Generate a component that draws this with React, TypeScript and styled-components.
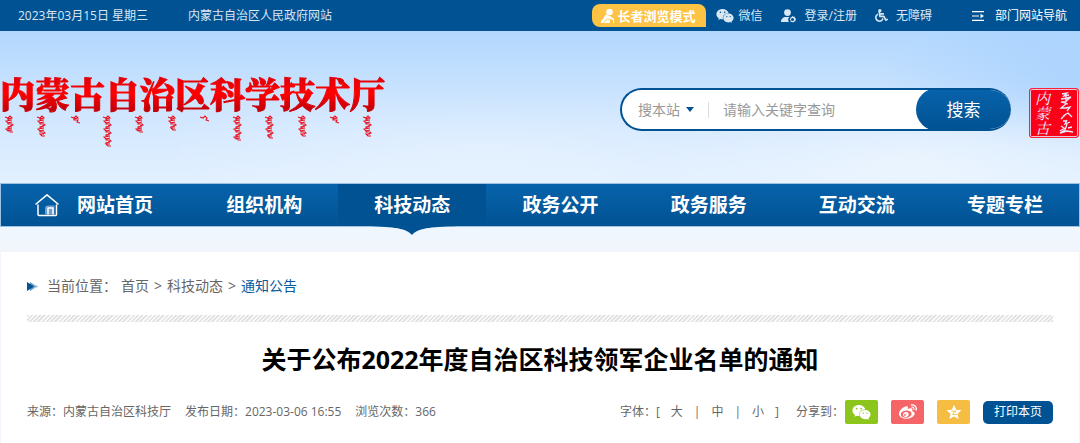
import React from "react";
import styled, { createGlobalStyle } from "styled-components";
import { FaWeixin, FaWeibo, FaWheelchair } from "react-icons/fa";

const deep = "#005293";
const bright = "#0863ab";

const GlobalStyle = createGlobalStyle`
  * { box-sizing: border-box; }
  body {
    margin: 0;
    background: #eef5fd;
    color: #666;
    font: 12px/20px "Open Sans", "Noto Sans CJK SC", sans-serif;
  }
  a { color: inherit; text-decoration: none; }
  button, input, select { font: inherit; }
  svg { display: block; flex: none; }
`;

const Page = styled.div`
  min-height: 100vh;
  display: flex;
  flex-direction: column;
  background:
    radial-gradient(ellipse 260px 70px at 84% 160px, rgba(255, 255, 255, 0.4), transparent),
    radial-gradient(ellipse 340px 60px at 45% 150px, rgba(255, 255, 255, 0.25), transparent),
    radial-gradient(ellipse 200px 70px at 100% 80px, rgba(130, 190, 255, 0.35), transparent),
    linear-gradient(#b2d7fe 31px, #cce4fe 100px, #e2f0ff 180px, #eff6fe 228px, #f2f6fc 252px);
`;

const TopBar = styled.div`
  display: flex;
  align-items: center;
  justify-content: space-between;
  height: 31px;
  padding: 0 13px 0 18px;
  background: ${deep};
  color: #d9e7f3;
`;

const TopGroup = styled.div<{ $gap: number }>`
  display: flex;
  align-items: center;
  gap: ${(p) => p.$gap}px;
  white-space: nowrap;
`;

const TopLink = styled.a<{ $strong?: boolean; $gap?: number }>`
  display: flex;
  align-items: center;
  gap: ${(p) => p.$gap ?? 8}px;
  color: ${(p) => (p.$strong ? "#fff" : "inherit")};
`;

const Spaced = styled(TopLink)`
  margin-left: 22px;
`;

const ElderLink = styled.a`
  display: flex;
  align-items: center;
  gap: 2px;
  height: 23px;
  padding: 0 10px 0 8px;
  border-radius: 8px 8px 0 8px;
  background: #fdc345;
  color: #fff;
  font-size: 13px;
  font-weight: 700;
  margin-right: -8px;
`;

const Header = styled.header`
  display: flex;
  align-items: flex-start;
  height: 153px;
  padding: 42px 1px 0 0;
`;

const Logo = styled.a`
  display: block;
  margin-right: auto;
`;

const LogoName = styled.h1`
  margin: 0 0 2px;
  font: 900 35px/40px "Noto Serif CJK SC", "Noto Sans CJK SC", serif;
  white-space: nowrap;
  color: transparent;
  -webkit-text-stroke: 1px transparent;
  background: linear-gradient(#e00008 10%, #ff0000 50%, #c60008 90%);
  background-clip: text;
  -webkit-background-clip: text;
`;

const Search = styled.form`
  display: flex;
  align-items: center;
  width: 391px;
  height: 43px;
  margin: 15px 18px 0 16px;
  border: 2px solid ${deep};
  border-right: 0;
  border-radius: 22px;
  background: #fff;
  overflow: hidden;
  font-size: 14px;
`;

const ScopeField = styled.label`
  display: flex;
  align-items: center;
  gap: 6px;
  padding: 0 14px 0 16px;
  border-right: 1px solid #ddd;
  line-height: 16px;
`;

const Scope = styled.select`
  appearance: none;
  width: 42px;
  height: 16px;
  padding: 0;
  border: 0;
  background: none;
  color: #999;
  line-height: 16px;
`;

const Keyword = styled.input`
  flex: 1;
  min-width: 0;
  padding: 0 0 0 14px;
  border: 0;
  outline: 0;
  background: none;
  color: #666;
  &::placeholder { color: #999; opacity: 1; }
`;

const SearchButton = styled.button`
  align-self: stretch;
  width: 95px;
  margin: -2px 0;
  border: 0;
  border-radius: 22px;
  background: linear-gradient(${bright}, ${deep});
  color: #fff;
  font-size: 17px;
`;

const Seal = styled.div`
  display: flex;
  justify-content: space-around;
  align-items: center;
  width: 50px;
  height: 50px;
  margin-top: 15px;
  border: 1px solid #ff2237;
  border-radius: 3px;
  background: #fb0019;
  box-shadow: inset 0 0 0 1px #e6c4dd;
  color: #e3eeff;
`;

const SealName = styled.span`
  writing-mode: vertical-rl;
  font: italic 400 15px/16px "Noto Serif CJK SC", serif;
`;

const Nav = styled.nav`
  display: grid;
  grid-template-columns: 189fr repeat(6, 148fr);
  height: 42px;
  margin: 0 1px;
  background: linear-gradient(${bright}, ${deep});
  box-shadow: 0 0 0 1px #9dc2e3;
`;

const NavLink = styled.a<{ $active?: boolean; $home?: boolean }>`
  position: relative;
  display: flex;
  align-items: center;
  justify-content: ${(p) => (p.$home ? "flex-start" : "center")};
  gap: 18px;
  padding-left: ${(p) => (p.$home ? 34 : 0)}px;
  background: ${(p) => (p.$active ? deep : "none")};
  color: #fff;
  font-size: 19px;
  font-weight: 700;
  white-space: nowrap;
`;

const NavPointer = styled.svg`
  position: absolute;
  top: 100%;
  left: 50%;
  margin-left: -45px;
`;

const Main = styled.main`
  flex: 1;
  margin: 26px 1px 0;
  padding: 24px 26px 18px;
  background: #fff;
`;

const Crumbs = styled.div`
  display: flex;
  align-items: center;
  gap: 4px;
  font-size: 14px;
  line-height: 20px;
`;

const CrumbLabel = styled.span`
  margin-left: 5px;
`;

const CrumbMark = styled.span`
  margin: 0 1px;
`;

const CrumbLink = styled.a<{ $current?: boolean }>`
  color: ${(p) => (p.$current ? "#0a5a9c" : "inherit")};
`;

const Stripe = styled.div`
  height: 7px;
  margin: 19px 0 21px;
  background: repeating-linear-gradient(135deg, #e0e0e0 0 1px, #fafafa 2px 3px);
`;

const Title = styled.h2`
  margin: 0;
  color: #000;
  font-size: 25px;
  font-weight: 700;
  line-height: 32px;
  text-align: center;
`;

const Meta = styled.div`
  display: flex;
  align-items: center;
  justify-content: space-between;
  margin-top: 25px;
  white-space: nowrap;
`;

const MetaGroup = styled.div<{ $gap: number }>`
  display: flex;
  align-items: center;
  gap: ${(p) => p.$gap}px;
`;

const FontSizes = styled.div`
  display: flex;
  align-items: center;
  gap: 11px;
  margin-right: 4px;
`;

const SizeButton = styled.button`
  padding: 0;
  border: 0;
  background: none;
  color: inherit;
`;

const ShareButton = styled.button<{ $color: string }>`
  display: flex;
  align-items: center;
  justify-content: center;
  width: 33px;
  height: 24px;
  padding: 0;
  border: 0;
  border-radius: 2px;
  background: ${(p) => p.$color};
  color: #fff;
`;

const ShareLabel = styled.span`
  width: 36px;
`;

const PrintButton = styled.button`
  width: 70px;
  height: 23px;
  padding: 0;
  border: 0;
  border-radius: 5px;
  background: ${deep};
  color: #fff;
`;

/* A vertical brush line: a spine with short teeth and a closing tail. */
function brush(x: number, top: number, length: number) {
  let d = `M${x - 5} ${top + 1}l3 1l2-2l2 2`;
  let y = top + 2;
  let i = 0;
  while (y < top + length - 4) {
    d += i % 4 === 1 ? "l-6 1l2 2l4-1" : i % 4 === 3 ? "l1 1l-3 1l2 0" : "l-4 1l0 1l4 0";
    y += 2;
    i += 1;
  }
  return d + (length > 8 ? "l-4 0l2 2l3 0" : "l-1 2l3 1");
}

const brushLines = [
  [10, 17], [42, 21], [76, 8], [108, 31], [140, 18], [173, 16],
  [205, 3], [238, 25], [270, 23], [303, 22], [335, 7], [368, 22],
];

const LogoScript = () => (
  <svg width="385" height="36" viewBox="0 0 385 36" fill="none" stroke="#ea1220" strokeWidth="1.1" aria-hidden="true">
    {brushLines.map(([x, length]) => (
      <path key={x} d={brush(x, 1, length)} />
    ))}
  </svg>
);

const SealScript = () => (
  <svg width="16" height="44" viewBox="0 0 16 44" fill="none" stroke="currentColor" strokeWidth="1.3" aria-hidden="true">
    <path d="M4 3l5-1-3 3 5-1M8 4v7M3 8l6-1 4-1-6 5-4 0 7 2M9 12l-6 5h5l4-1-3 4M5 25l5-3 4 4M8 23l-5 5M5 30h4M9 29l-2 4 5-2M3 35l3 2M9 33l-2 6-5 3 7-2 6 1M10 37l4-1M2 40l5-3" />
  </svg>
);

const ElderIcon = () => (
  <svg width="16" height="16" viewBox="0 0 16 16" fill="#fff">
    <circle cx="9.500" cy="4" r="3.300" />
    <path d="M6 6.500C4 8 4 11 1 13v2h9v-4l3 1v3h1v-4L10 8z" />
    <path d="M3.500 14.500l4-3.500 3 .5" fill="none" stroke="#fdc345" strokeWidth=".9" />
  </svg>
);

const UserIcon = () => (
  <svg width="16" height="14" viewBox="0 0 16 14" fill="currentColor">
    <circle cx="6.5" cy="3.6" r="3.4" />
    <path d="M0 13c0-3 2-5 5-5h3.4c-1.700 1.400-1.600 3.700-.4 5z" />
    <path fillRule="evenodd" d="M11.500 7l1 .8 1.300 0 .3 1.200 1 .9-.6 1 0 1.300-1.300.3-.9 1-1.100-.6-1.300 0-.3-1.300-.8-.9.600-1.100 0-1.200 1.300-.3zM11.500 9a1.500 1.500 0 100 3 1.500 1.500 0 000-3z" />
  </svg>
);

const MenuIcon = () => (
  <svg width="12" height="10" viewBox="0 0 12 10" fill="none" stroke="currentColor" strokeWidth="1.200">
    <path d="M0 .6h12M0 5h7M0 9.400h12" />
    <path d="M8.500 2.800L12 5 8.500 7.200z" fill="currentColor" stroke="none" />
  </svg>
);

const HomeIcon = () => (
  <svg width="24" height="24" viewBox="0 0 24 24" fill="none" stroke="#fff" strokeWidth="1.500" strokeLinecap="round" strokeLinejoin="round">
    <path d="M1 11L12 1.800 23 11M3 12v9.500q0 1 1 1h16.500q1 0 1-1V12" />
    <path d="M10 21.500v-6q0-3 3-3h6.500v9z" fill="#6f9fd0" stroke="none" />
    <path d="M13 21v-6h5v6" />
  </svg>
);

const CrumbIcon = () => (
  <svg width="11" height="9" viewBox="0 0 11 9">
    <path d="M3 0l8 4.500L3 9z" fill="#6c9cc8" />
    <path d="M5 .5l4 4-4 4" fill="none" stroke="#fff" strokeWidth=".7" />
    <path d="M0 0l7 4.500L0 9z" fill={deep} />
  </svg>
);

const StarIcon = () => (
  <svg width="16" height="16" viewBox="0 0 16 16">
    <path d="M8 .8l2.200 4.900 5.300.6-4 3.500 1.200 5.300L8 12.400l-4.700 2.700 1.200-5.300-4-3.500 5.300-.6z" fill="#fff" />
    <path d="M5.500 7.200h4.500L6.500 10.300q2.500.6 4.500 0" fill="none" stroke="#f5bd42" strokeWidth=".9" />
  </svg>
);

const navItems = ["网站首页", "组织机构", "科技动态", "政务公开", "政务服务", "互动交流", "专题专栏"];

export default function App() {
  return (
    <Page>
      <GlobalStyle />
      <TopBar>
        <TopGroup $gap={40}>
          <span>2023年03月15日 星期三</span>
          <TopLink href="#gov">内蒙古自治区人民政府网站</TopLink>
        </TopGroup>
        <TopGroup $gap={18}>
          <ElderLink href="#elder"><ElderIcon />长者浏览模式</ElderLink>
          <TopLink href="#wechat" $gap={5}><FaWeixin size={18} />微信</TopLink>
          <TopLink href="#login"><UserIcon />登录/注册</TopLink>
          <TopLink href="#accessible"><FaWheelchair size={13} />无障碍</TopLink>
          <Spaced href="#sites" $strong $gap={11}><MenuIcon />部门网站导航</Spaced>
        </TopGroup>
      </TopBar>
      <Header>
        <Logo href="#home">
          <LogoName>内蒙古自治区科学技术厅</LogoName>
          <LogoScript />
        </Logo>
        <Search onSubmit={(e) => e.preventDefault()}>
          <ScopeField>
            <Scope aria-label="搜索范围"><option>搜本站</option></Scope>
            <svg width="8" height="5" viewBox="0 0 8 5"><path d="M0 0h8L4 5z" fill={deep} /></svg>
          </ScopeField>
          <Keyword aria-label="关键字" placeholder="请输入关键字查询" />
          <SearchButton type="submit">搜索</SearchButton>
        </Search>
        <Seal>
          <SealName>内蒙古</SealName>
          <SealScript />
        </Seal>
      </Header>
      <Nav>
        {navItems.map((name, i) => (
          <NavLink key={name} href="#nav" $home={i === 0} $active={i === 2}>
            {i === 0 && <HomeIcon />}
            {name}
            {i === 2 && (
              <NavPointer width="90" height="9" viewBox="0 0 90 9">
                <path d="M0 0h90C68 1 52 1 45 9 38 1 22 1 0 0z" fill={deep} />
              </NavPointer>
            )}
          </NavLink>
        ))}
      </Nav>
      <Main>
        <Crumbs>
          <CrumbIcon />
          <CrumbLabel>当前位置：</CrumbLabel>
          <CrumbLink href="#home">首页</CrumbLink>
          <CrumbMark>&gt;</CrumbMark>
          <CrumbLink href="#news">科技动态</CrumbLink>
          <CrumbMark>&gt;</CrumbMark>
          <CrumbLink href="#notices" $current>通知公告</CrumbLink>
        </Crumbs>
        <Stripe />
        <Title>关于公布2022年度自治区科技领军企业名单的通知</Title>
        <Meta>
          <MetaGroup $gap={14}>
            <span>来源：内蒙古自治区科技厅</span>
            <span>发布日期：2023-03-06 16:55</span>
            <span>浏览次数：366</span>
          </MetaGroup>
          <MetaGroup $gap={13}>
            <FontSizes>
              <span>字体：[</span>
              <SizeButton>大</SizeButton>
              <span>|</span>
              <SizeButton>中</SizeButton>
              <span>|</span>
              <SizeButton>小</SizeButton>
              <span>]</span>
            </FontSizes>
            <ShareLabel>分享到：</ShareLabel>
            <ShareButton $color="#8cc51b" aria-label="微信"><FaWeixin size={19} /></ShareButton>
            <ShareButton $color="#f56467" aria-label="微博"><FaWeibo size={18} /></ShareButton>
            <ShareButton $color="#f5bd42" aria-label="QQ空间"><StarIcon /></ShareButton>
            <PrintButton>打印本页</PrintButton>
          </MetaGroup>
        </Meta>
      </Main>
    </Page>
  );
}
